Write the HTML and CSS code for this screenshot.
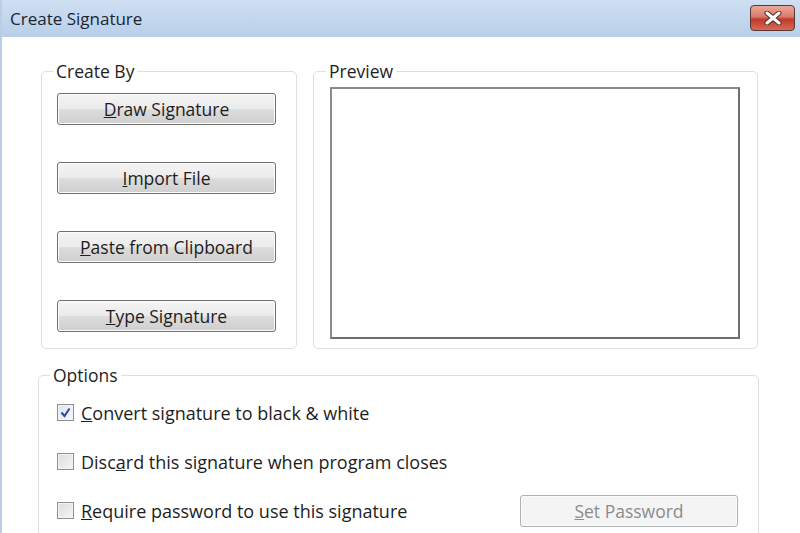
FILE: index.html
```html
<!doctype html>
<html>
    <head>
        <meta charset="utf-8">
        <title>Create Signature</title>
        <link rel="stylesheet" href="styles.css">
    </head>
    <body>
        <div class="window">
            <div class="titlebar">
                <span class="titletext">Create Signature</span>
                <div class="closebtn">
                    <svg width="20" height="14" viewBox="0 0 20 14">
                        <path d="M4 2 L16 12 M16 2 L4 12" stroke="#5a2a24" stroke-width="5" stroke-linecap="round"/>
                        <path d="M4 2 L16 12 M16 2 L4 12" stroke="#ffffff" stroke-width="3" stroke-linecap="round"/>
                    </svg>
                </div>
            </div>
            <div class="content">
                <div class="toprow">
                    <fieldset class="group createby">
                        <legend>Create By</legend>
                        <button class="btn"><u>D</u>raw Signature</button>
                        <button class="btn"><u>I</u>mport File</button>
                        <button class="btn"><u>P</u>aste from Clipboard</button>
                        <button class="btn"><u>T</u>ype Signature</button>
                    </fieldset>
                    <fieldset class="group preview">
                        <legend>Preview</legend>
                        <div class="previewbox"></div>
                    </fieldset>
                </div>
                <fieldset class="group options">
                    <legend>Options</legend>
                    <div class="optrow">
                        <span class="check checked">
                            <svg width="13" height="13" viewBox="0 0 13 13"><path d="M2.5 6.5 L5.5 10 L10.5 2.5" fill="none" stroke="#2c4a9a" stroke-width="2"/></svg>
                        </span>
                        <span class="label"><u>C</u>onvert signature to black &amp; white</span>
                    </div>
                    <div class="optrow">
                        <span class="check"></span>
                        <span class="label">Disc<u>a</u>rd this signature when program closes</span>
                    </div>
                    <div class="optrow">
                        <span class="check"></span>
                        <span class="label"><u>R</u>equire password to use this signature</span>
                        <button class="btn disabled"><u>S</u>et Password</button>
                    </div>
                </fieldset>
            </div>
        </div>
    </body>
</html>
```

FILE: styles.css
```css
body{
    margin: 0;
    background-color: white;
    font-family: 'Open Sans', 'Noto Sans', sans-serif;
    font-size: 17.5px;
    color: #1e1e1e;
    overflow: hidden;
}

.window{
    width: 800px;
    height: 533px;
    border-left: 2px solid #b9cde4;
    box-sizing: border-box;
    overflow: hidden;
}

.titlebar{
    height: 37px;
    background: linear-gradient(#d0e0f2, #b8cee9);
    display: flex;
    align-items: center;
    justify-content: space-between;
    padding: 0 5px 0 8px;
}

.titletext{
    font-size: 17px;
    color: #1a2533;
    margin-top: -1px;
}

.closebtn{
    width: 43px;
    height: 24px;
    margin-top: -1px;
    border: 1px solid #5e3530;
    border-radius: 4px;
    background: linear-gradient(#eaa999 0%, #d9796b 45%, #c2392a 55%, #d46a55 100%);
    display: flex;
    align-items: center;
    justify-content: center;
}

.content{
    padding: 22px 40px 0 36px;
}

.toprow{
    display: flex;
    gap: 16px;
}

.group{
    border: 1px solid #dcdfe3;
    border-radius: 5px;
    margin: 0;
    box-sizing: border-box;
}

.group legend{
    padding: 0 3px;
    margin-left: -4px;
    color: #1e1e1e;
}

.createby{
    width: 256px;
    height: 290px;
    margin-left: 3px;
    padding: 10px 0 0 15px;
    display: flex;
    flex-direction: column;
    gap: 37px;
}

.btn{
    font-family: 'Open Sans', 'Noto Sans', sans-serif;
    font-size: 17.5px;
    color: #1e1e1e;
    width: 219px;
    height: 32px;
    border: 1px solid #707070;
    border-radius: 3px;
    background: linear-gradient(#f4f4f4 0%, #ebebeb 50%, #dcdcdc 52%, #cfcfcf 100%);
    box-shadow: inset 0 0 0 1px #fcfcfc;
    padding: 0;
}

.preview{
    width: 445px;
    height: 290px;
    padding: 4px 0 0 16px;
}

.previewbox{
    width: 410px;
    height: 252px;
    border: 2px solid #8a8a8a;
    border-right-color: #6e6e6e;
    border-bottom-color: #6e6e6e;
    box-sizing: border-box;
}

.options{
    margin-top: 14px;
    width: 721px;
    height: 200px;
    padding: 1px 0 0 18px;
}

.options legend{
    margin-left: -7px;
}

.optrow{
    display: flex;
    align-items: center;
    height: 49px;
    gap: 7px;
}

.label{
    font-size: 18px;
}

.check{
    width: 17px;
    height: 17px;
    box-sizing: border-box;
    border: 1px solid #8f8f8f;
    background: linear-gradient(135deg, #dcdcdc, #f6f6f6);
    box-shadow: inset 0 0 0 1px #f4f4f4;
    display: flex;
    align-items: center;
    justify-content: center;
}

.check.checked{
    background: linear-gradient(135deg, #dde3ee, #f7f9fc);
}

.btn.disabled{
    margin-left: auto;
    margin-right: 20px;
    width: 218px;
    color: #8c8c8c;
    border-color: #adb2b5;
    background: #f4f4f4;
}
```
